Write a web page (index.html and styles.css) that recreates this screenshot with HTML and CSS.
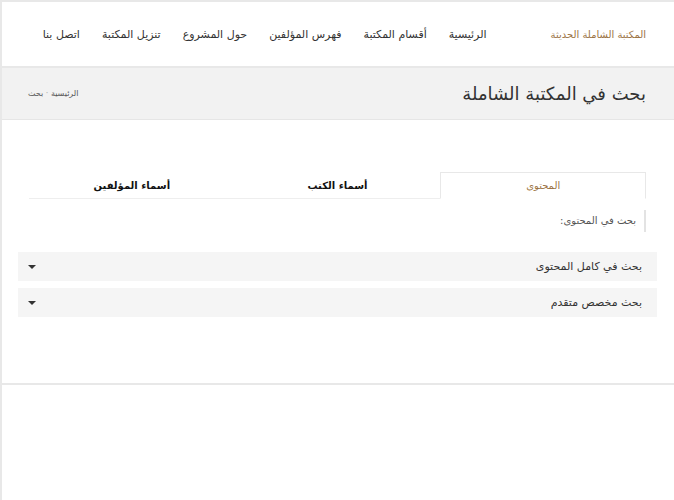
FILE: index.html
```html
<!DOCTYPE html>
<html lang="ar" dir="rtl">
<head>
    <meta charset="utf-8">
    <title>بحث في المكتبة الشاملة</title>
    <meta name="viewport" content="width=device-width, initial-scale=1.0">
    <link rel="stylesheet" href="styles.css">
</head>
<body>
    <div class="page">
        <header class="navbar">
            <a class="brand" href="#">المكتبة الشاملة الحديثة</a>
            <nav class="nav-links">
                <a href="#">الرئيسية</a>
                <a href="#">أقسام المكتبة</a>
                <a href="#">فهرس المؤلفين</a>
                <a href="#">حول المشروع</a>
                <a href="#">تنزيل المكتبة</a>
                <a href="#">اتصل بنا</a>
            </nav>
        </header>

        <div class="page-title">
            <h1>بحث في المكتبة الشاملة</h1>
            <div class="breadcrumb"><a href="#">الرئيسية</a> <span class="sep">·</span> بحث</div>
        </div>

        <main class="content">
            <ul class="tabs">
                <li class="active"><a href="#">المحتوى</a></li>
                <li><a href="#">أسماء الكتب</a></li>
                <li><a href="#">أسماء المؤلفين</a></li>
            </ul>

            <div class="tab-pane">
                <p class="hint">بحث في المحتوى:</p>
            </div>

            <div class="panels">
                <div class="panel">
                    <span>بحث في كامل المحتوى</span>
                    <span class="caret"></span>
                </div>
                <div class="panel">
                    <span>بحث مخصص متقدم</span>
                    <span class="caret"></span>
                </div>
            </div>
        </main>

        <footer class="footer"></footer>
    </div>
</body>
</html>
```

FILE: styles.css
```css
:root {
    --brand-color: #9c7445;
    --border-color: #e8e8e8;
    --text-color: #333;
}

* {
    box-sizing: border-box;
}

body {
    margin: 0;
    background: #fff;
    font-family: "DejaVu Sans", "Noto Sans", sans-serif;
    color: var(--text-color);
}

a {
    color: inherit;
    text-decoration: none;
}

.page {
    min-height: 100vh;
    border-top: 2px solid var(--border-color);
    border-left: 2px solid var(--border-color);
}

.navbar {
    height: 66px;
    display: flex;
    align-items: center;
    padding: 0 28px;
    border-bottom: 2px solid var(--border-color);
    white-space: nowrap;
}

.brand {
    color: var(--brand-color);
    font-size: 10px;
    margin-left: 64px;
}

.nav-links {
    display: flex;
    gap: 22px;
    font-size: 11px;
    color: #333;
}

.page-title {
    height: 52px;
    background: #f2f2f2;
    border-bottom: 1px solid #e6e6e6;
    display: flex;
    align-items: center;
    justify-content: space-between;
    padding: 0 28px 0 26px;
}

h1 {
    margin: 0;
    font-size: 18px;
    font-weight: normal;
    color: #333;
}

.breadcrumb {
    font-size: 8px;
    color: #555;
}

.breadcrumb .sep {
    color: #aaa;
}

.content {
    padding: 52px 17px 0 16px;
    height: 265px;
    border-bottom: 2px solid var(--border-color);
}

.tabs {
    list-style: none;
    margin: 0 11px;
    padding: 0;
    display: grid;
    grid-template-columns: repeat(3, 1fr);
}

.tabs li {
    height: 27px;
    display: flex;
    align-items: center;
    justify-content: center;
    font-size: 10px;
    font-weight: bold;
    color: #111;
    border-bottom: 1px solid #eee;
    white-space: nowrap;
}

.tabs li.active {
    border: 1px solid var(--border-color);
    border-bottom-color: transparent;
    color: var(--brand-color);
    font-weight: normal;
}

.tab-pane {
    padding: 11px 11px 0;
}

.hint {
    margin: 0;
    padding: 5px 8px 6px 0;
    border-right: 2px solid #e3e3e3;
    font-size: 10px;
    color: #555;
}

.panels {
    margin-top: 20px;
    display: flex;
    flex-direction: column;
    gap: 7px;
}

.panel {
    height: 29px;
    background: #f5f5f5;
    display: flex;
    align-items: center;
    justify-content: space-between;
    padding: 0 15px 0 10px;
    font-size: 11px;
    color: #333;
}

.caret {
    width: 0;
    height: 0;
    border-left: 4px solid transparent;
    border-right: 4px solid transparent;
    border-top: 4px solid #333;
}

.footer {
    height: 116px;
}
```
